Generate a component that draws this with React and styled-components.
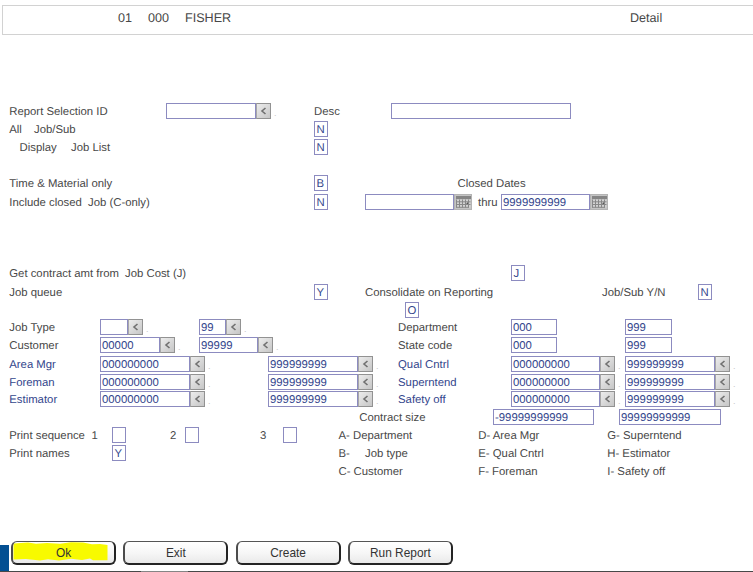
import React from "react";
import styled, { createGlobalStyle } from "styled-components";

const ink = "#484848";
const blue = "#33468c";
const edge = "#8c8bc0";

const GlobalStyle = createGlobalStyle`
  * { box-sizing: border-box; }
  html, body { margin: 0; background: #fff; }
  body {
    overflow: hidden;
    font-family: "Liberation Sans", Arial, sans-serif;
    font-size: 11.35px;
    line-height: 18px;
    color: ${ink};
    text-rendering: geometricPrecision;
  }
`;

/* Turns column starts into grid tracks; the last column takes what is left. */
const tracks = (stops) =>
  stops.map((s, i) => (i + 1 < stops.length ? `${stops[i + 1] - s}px` : "1fr")).join(" ");

const Page = styled.main`
  display: flex;
  flex-direction: column;
  width: 753px;
  height: 572px;
  padding-top: 5px;
  overflow: hidden;
`;

const Header = styled.header`
  display: grid;
  grid-template-columns: 30px 37px 445px 1fr;
  flex: none;
  height: 30px;
  margin-left: 2px;
  padding: 3px 0 0 115px;
  border: 1px solid #d2d2d2;
  border-right: 0;
  font-size: 12.6px;
`;

const Form = styled.section`
  display: flex;
  flex-direction: column;
  height: 436px;
  margin-top: 68px;
`;

const Line = styled.div`
  display: grid;
  flex: none;
  grid-template-columns: ${(p) => tracks(p.$stops)};
  align-items: start;
  height: ${(p) => p.$h || 18}px;
  padding-left: ${(p) => p.$stops[0]}px;
`;

const Label = styled.span`
  white-space: pre;
  color: ${(p) => (p.$blue ? blue : ink)};
`;

const Field = styled.div`
  flex: none;
  width: ${(p) => p.$w}px;
  height: 16px;
  padding-left: 1px;
  border: 1px solid ${edge};
  background: #fff;
  color: ${blue};
  line-height: 16px;
  white-space: pre;
`;

const Flag = styled(Field)`
  width: 14px;
  padding-left: 1.5px;
`;

const Group = styled.div`
  display: flex;
  height: 16px;
`;

const LookupButton = styled.button`
  display: grid;
  place-items: center;
  width: 15px;
  height: 16px;
  padding: 0;
  border: 1px solid #929292;
  border-left-color: #a8a8a8;
  background: linear-gradient(135deg, #ececec, #c6c6c6);
`;

const Dot = styled.span`
  width: 4px;
  margin-left: 3px;
  color: #c4c4c4;
  font-size: 9px;
  line-height: 20px;
`;

const CalendarButton = styled(LookupButton)`
  width: 18px;
  border-color: #b4b4b4;
  background: #c4c4c4;
`;

const Thru = styled.span`
  margin: 0 3px 0 6px;
`;

const Actions = styled.footer`
  display: flex;
  align-items: flex-start;
  flex: 1;
  min-height: 0;
  padding-top: 2px;
`;

const Tab = styled.div`
  flex: none;
  width: 9px;
  height: 27px;
  margin: 4px 2px 0 0;
  background: #034f92;
`;

const ActionButton = styled.button`
  position: relative;
  flex: none;
  width: 105px;
  height: 24px;
  margin-right: 7.3px;
  padding: 0;
  border: 2px solid #242424;
  border-top: 1.5px solid #555;
  border-left-color: #4c4c4c;
  border-radius: 6px;
  background: linear-gradient(#fff, #f6f6f6 55%, #e9e9e9);
  color: #333;
  font: inherit;
  font-size: 11.9px;
  line-height: 20px;
`;

const Marker = styled.svg`
  position: absolute;
  left: 0;
  top: 0;
  width: 96px;
  height: 20px;
`;

const Caption = styled.span`
  position: relative;
`;

const Baseline = styled.div`
  flex: none;
  height: 1px;
  background: linear-gradient(90deg, #484848 141px, #858585 141px, #858585 188px, #484848 188px);
`;

function Lookup({ w, value = "" }) {
  return (
    <Group>
      <Field $w={w}>{value}</Field>
      <LookupButton>
        <svg width="7" height="8" viewBox="0 0 7 8">
          <path d="M5.5 1L2 4l3.5 3" fill="none" stroke="#707070" strokeWidth="1.6" />
        </svg>
      </LookupButton>
      <Dot>.</Dot>
    </Group>
  );
}

function DateField({ w, value = "" }) {
  return (
    <Group>
      <Field $w={w}>{value}</Field>
      <CalendarButton>
        <svg width="15" height="12" viewBox="0 0 15 12">
          <path d="M0 0h15v3H0z" fill="#858585" />
          <path d="M0 4h14.5v7.5H0z" fill="#d2d2d2" />
          <path d="M.5 3.5v8M3.5 3.5v8M6.5 3.5v8M9.5 3.5v8M12.5 3.5v8M0 5.8h14.5M0 8.5h14.5M0 11.3h13" stroke="#888" strokeWidth="1" />
          <path d="M10 8l2-2v2z" fill="#555" />
        </svg>
      </CalendarButton>
    </Group>
  );
}

const people = [
  { left: "Area Mgr", right: "Qual Cntrl", h: 18 },
  { left: "Foreman", right: "Superntend", h: 17 },
  { left: "Estimator", right: "Safety off", h: 18 },
];

export default function App() {
  return (
    <>
      <GlobalStyle />
      <Page>
        <Header>
          <span>01</span>
          <span>000</span>
          <span>FISHER</span>
          <span>Detail</span>
        </Header>
        <Form>
          <Line $stops={[9.25, 166, 314, 391]}>
            <Label>Report Selection ID</Label>
            <Lookup w={90} />
            <Label>Desc</Label>
            <Field $w={180} />
          </Line>
          <Line $stops={[9.25, 34, 314]}>
            <Label>All</Label>
            <Label>Job/Sub</Label>
            <Flag>N</Flag>
          </Line>
          <Line $stops={[19.5, 71, 314]} $h={36}>
            <Label>Display</Label>
            <Label>Job List</Label>
            <Flag>N</Flag>
          </Line>
          <Line $stops={[9.25, 314, 457.5]} $h={19}>
            <Label>Time &amp; Material only</Label>
            <Flag>B</Flag>
            <Label>Closed Dates</Label>
          </Line>
          <Line $stops={[9.25, 88, 314, 365, 472, 501]} $h={71}>
            <Label>Include closed</Label>
            <Label>Job (C-only)</Label>
            <Flag>N</Flag>
            <DateField w={89} />
            <Thru>thru</Thru>
            <DateField w={89} value="9999999999" />
          </Line>
          <Line $stops={[9.25, 125, 511]} $h={19}>
            <Label>Get contract amt from</Label>
            <Label>Job Cost (J)</Label>
            <Flag>J</Flag>
          </Line>
          <Line $stops={[9.25, 314, 365, 602, 698]}>
            <Label>Job queue</Label>
            <Flag>Y</Flag>
            <Label>Consolidate on Reporting</Label>
            <Label>Job/Sub Y/N</Label>
            <Flag>N</Flag>
          </Line>
          <Line $stops={[405]} $h={17}>
            <Flag>O</Flag>
          </Line>
          <Line $stops={[9.25, 100, 199, 398, 511, 625]}>
            <Label>Job Type</Label>
            <Lookup w={28} />
            <Lookup w={27} value="99" />
            <Label>Department</Label>
            <Field $w={46}>000</Field>
            <Field $w={47}>999</Field>
          </Line>
          <Line $stops={[9.25, 100, 199, 398, 511, 625]} $h={19}>
            <Label>Customer</Label>
            <Lookup w={60} value="00000" />
            <Lookup w={59} value="99999" />
            <Label>State code</Label>
            <Field $w={46}>000</Field>
            <Field $w={47}>999</Field>
          </Line>
          {people.map((p) => (
            <Line key={p.left} $stops={[9.25, 100, 268, 398, 511, 625]} $h={p.h}>
              <Label $blue>{p.left}</Label>
              <Lookup w={90} value="000000000" />
              <Lookup w={90} value="999999999" />
              <Label $blue>{p.right}</Label>
              <Lookup w={89} value="000000000" />
              <Lookup w={90} value="999999999" />
            </Line>
          ))}
          <Line $stops={[359.25, 493, 619]}>
            <Label>Contract size</Label>
            <Field $w={101}>-99999999999</Field>
            <Field $w={102}>99999999999</Field>
          </Line>
          <Line $stops={[9.25, 91.5, 112, 170, 185, 260, 283, 338.5, 478.25, 607.25]}>
            <Label>Print sequence</Label>
            <Label>1</Label>
            <Flag />
            <Label>2</Label>
            <Flag />
            <Label>3</Label>
            <Flag />
            <Label>A- Department</Label>
            <Label>D- Area Mgr</Label>
            <Label>G- Superntend</Label>
          </Line>
          <Line $stops={[9.25, 112, 338.5, 365, 478.25, 607.25]}>
            <Label>Print names</Label>
            <Flag>Y</Flag>
            <Label>B-</Label>
            <Label>Job type</Label>
            <Label>E- Qual Cntrl</Label>
            <Label>H- Estimator</Label>
          </Line>
          <Line $stops={[338.5, 478.25, 607.25]}>
            <Label>C- Customer</Label>
            <Label>F- Foreman</Label>
            <Label>I- Safety off</Label>
          </Line>
        </Form>
        <Actions>
          <Tab />
          <ActionButton>
            <Marker viewBox="0 0 96 20">
              <path
                d="M1 1.5L15 .5 23 1.7 34 1 47 1.7 58 .2 70 .5 79 2.2 87 2 94.5 3V18.2H80L77 16.5 69 18 58 16.7 46 18.5 35 17.2 27 18.6 13 17 .5 17.5V4z"
                fill="#f8fa00"
              />
            </Marker>
            <Caption>Ok</Caption>
          </ActionButton>
          <ActionButton>Exit</ActionButton>
          <ActionButton>Create</ActionButton>
          <ActionButton>Run Report</ActionButton>
        </Actions>
        <Baseline />
      </Page>
    </>
  );
}
